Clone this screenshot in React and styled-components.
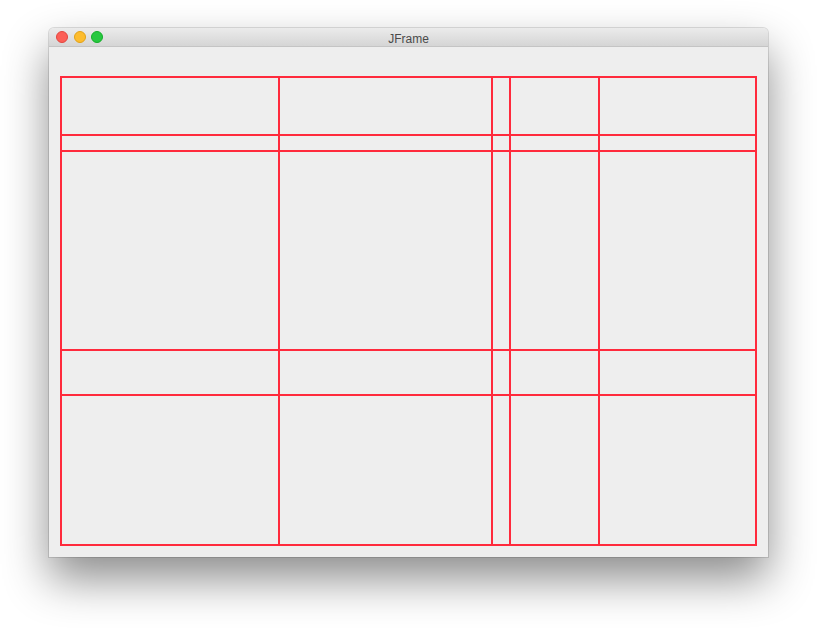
import React from 'react';
import styled, { createGlobalStyle } from 'styled-components';

const GlobalStyle = createGlobalStyle`
  html, body {
    margin: 0;
    padding: 0;
    background: #ffffff;
  }
  body {
    font-family: "Liberation Sans", Arial, sans-serif;
  }
`;

const Page = styled.div`
  width: 817px;
  height: 628px;
  padding: 28px 0 0 49px;
  box-sizing: border-box;
  overflow: hidden;
`;

const Window = styled.div`
  width: 719px;
  height: 529px;
  display: flex;
  flex-direction: column;
  border-radius: 5px 5px 0 0;
  background: #eeeeee;
  box-shadow: 0 0 0 1px rgba(0, 0, 0, 0.12), 0 22px 45px rgba(0, 0, 0, 0.45);
  overflow: hidden;
`;

const TitleBar = styled.div`
  position: relative;
  height: 19px;
  flex-shrink: 0;
  display: flex;
  align-items: flex-start;
  justify-content: center;
  padding-top: 4px;
  box-sizing: border-box;
  background: linear-gradient(#ebebeb, #d5d5d5);
  border-bottom: 1px solid #c4c4c4;
`;

const Lights = styled.div`
  position: absolute;
  left: 7px;
  top: 3px;
  display: flex;
  gap: 5.5px;
`;

const Light = styled.span`
  width: 12px;
  height: 12px;
  border-radius: 50%;
  box-sizing: border-box;
  background: ${({ color }) => color};
  border: 0.5px solid ${({ edge }) => edge};
`;

const Title = styled.span`
  font-size: 12px;
  line-height: 14px;
  color: #4a4a4a;
`;

const Content = styled.div`
  flex: 1;
  padding: 29px 12px 12px 11px;
  background: #eeeeee;
`;

const Grid = styled.div`
  display: grid;
  grid-template-columns: 216px 211px 16px 87px 155px;
  grid-template-rows: 56px 14px 197px 43px 148px;
  gap: 2px;
  padding: 2px;
  width: fit-content;
  background: #ff2a3c;
`;

const Cell = styled.div`
  background: #eeeeee;
`;

const lights = [
  { color: '#fc5f57', edge: '#e2463f' },
  { color: '#fdbc2e', edge: '#e1a116' },
  { color: '#28c840', edge: '#14ae29' },
];

export default function App() {
  return (
    <>
      <GlobalStyle />
      <Page>
        <Window>
          <TitleBar>
            <Lights>
              {lights.map((l, i) => (
                <Light key={i} color={l.color} edge={l.edge} />
              ))}
            </Lights>
            <Title>JFrame</Title>
          </TitleBar>
          <Content>
            <Grid>
              {Array.from({ length: 25 }).map((_, i) => (
                <Cell key={i} />
              ))}
            </Grid>
          </Content>
        </Window>
      </Page>
    </>
  );
}
